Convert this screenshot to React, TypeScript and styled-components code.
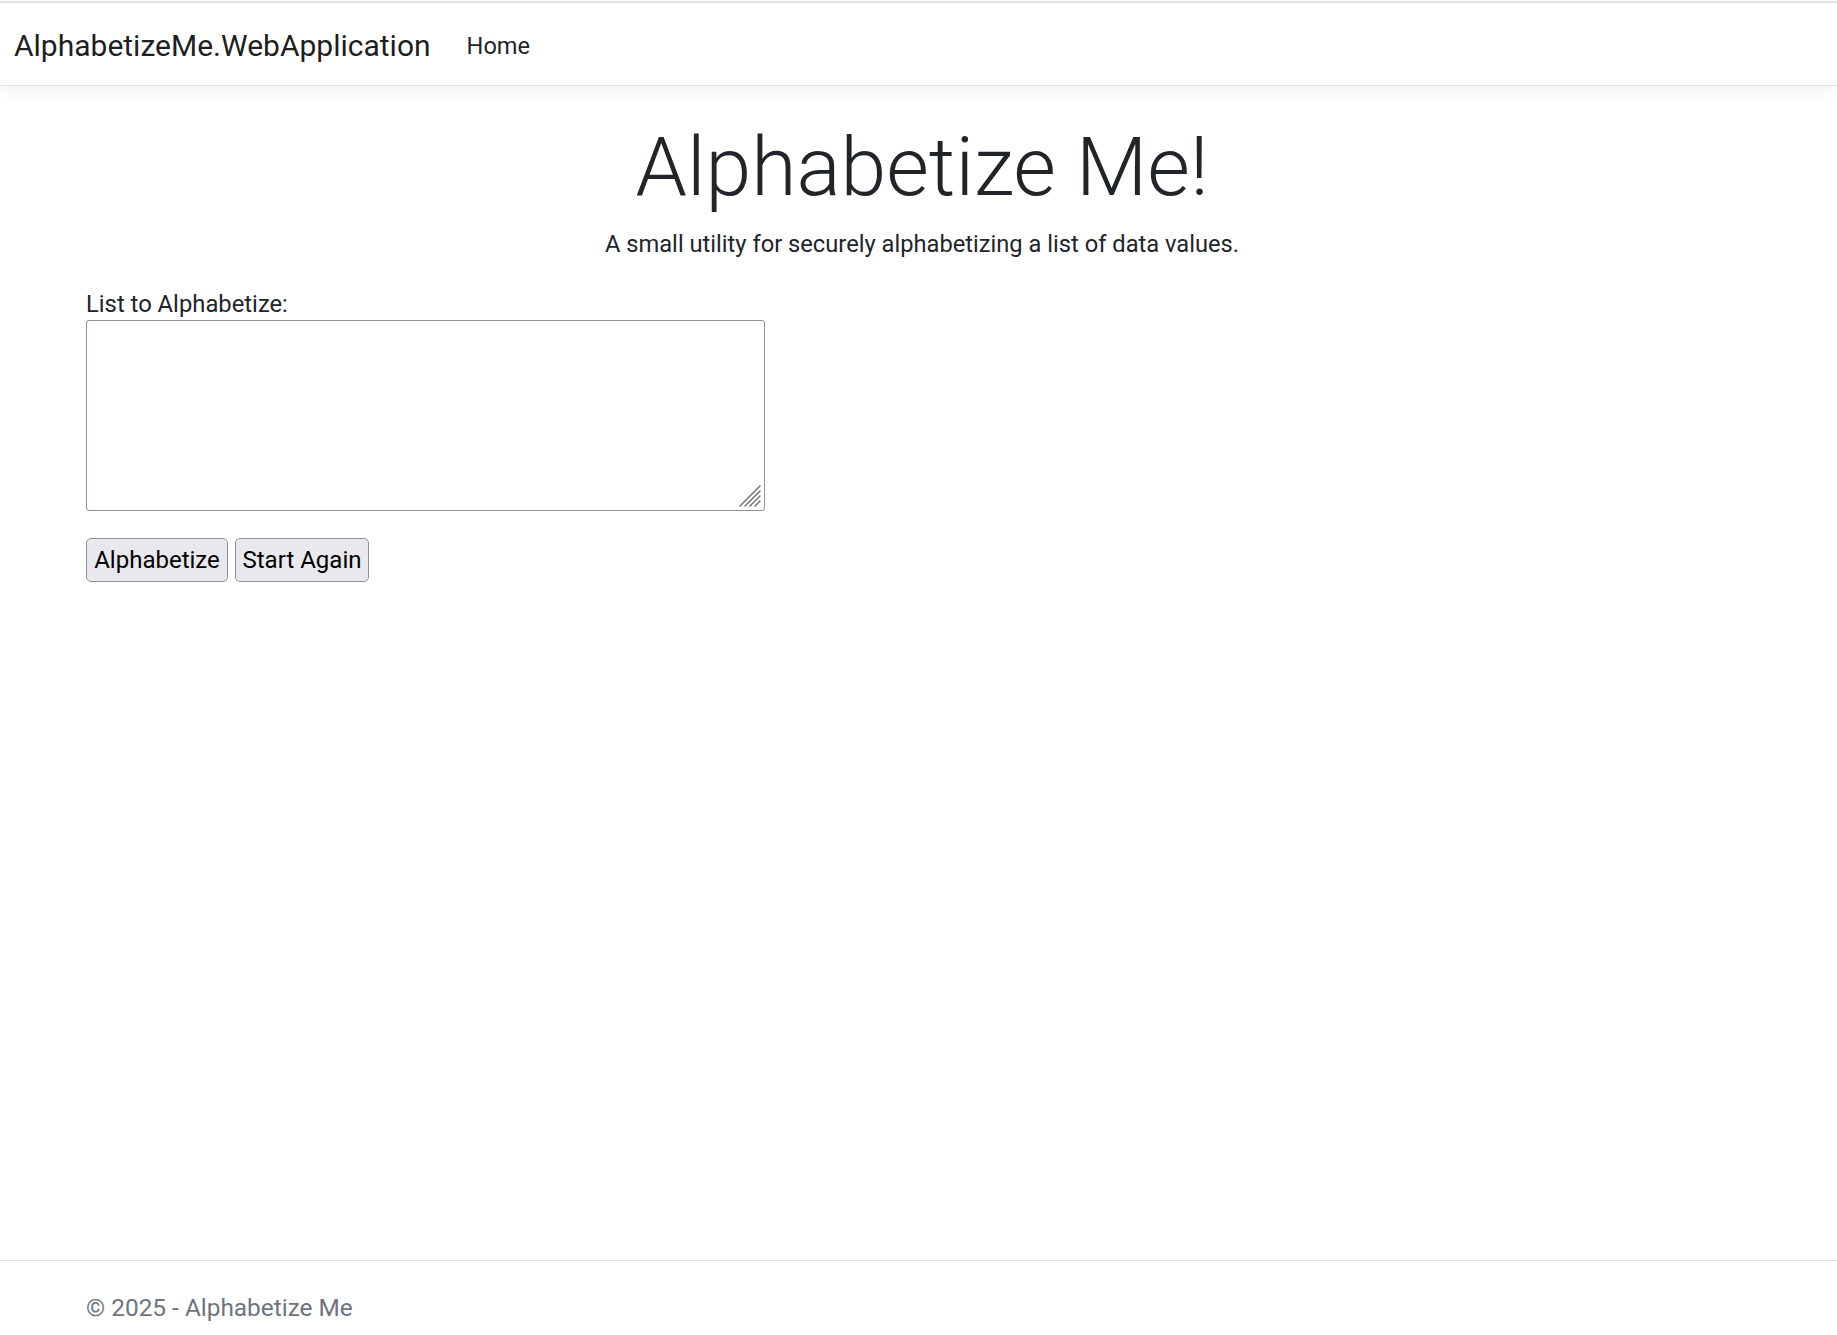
import React from "react";
import styled, { createGlobalStyle } from "styled-components";

const GlobalStyle = createGlobalStyle`
  html, body, #root {
    margin: 0;
    padding: 0;
    height: 100%;
    overflow: hidden;
    background: #ffffff;
  }
  body {
    font-family: Roboto, "Liberation Sans", sans-serif;
    color: #212529;
  }
  * { box-sizing: border-box; }
`;

const Page = styled.div`
  display: flex;
  flex-direction: column;
  height: 100vh;
`;

const NavBar = styled.nav`
  margin-top: 1px;
  border-top: 2px solid #e2e2e2;
  border-bottom: 1px solid #dee2e6;
  box-shadow: 0 6px 18px rgba(0, 0, 0, 0.05);
  height: 85px;
  display: flex;
  align-items: center;
  padding: 0 0 0 14px;
  background: #fff;
  position: relative;
  z-index: 1;
`;

const Brand = styled.a`
  font-size: 30px;
  line-height: 45px;
  color: rgba(0, 0, 0, 0.9);
  text-decoration: none;
  margin-right: 36px;
  margin-top: 2px;
`;

const NavLink = styled.a`
  font-size: 23.6px;
  line-height: 36px;
  color: #212529;
  text-decoration: none;
  margin-top: 4px;
`;

const Main = styled.main`
  padding: 31px 79px 0 86px;
  display: flex;
  flex-direction: column;
`;

const Hero = styled.div`
  text-align: center;
`;

const Title = styled.h1`
  font-size: 82.4px;
  font-weight: 300;
  line-height: 101px;
  margin: 0 0 8px;
`;

const Lead = styled.p`
  font-size: 23.7px;
  line-height: 36px;
  margin: 0 0 24px;
`;

const Label = styled.label`
  display: block;
  font-size: 23.8px;
  line-height: 36px;
  height: 33.5px;
`;

const Field = styled.div`
  position: relative;
  width: 679px;
  height: 191px;
`;

const ListBox = styled.textarea`
  display: block;
  width: 679px;
  height: 191px;
  border: 1px solid #8f8f9d;
  border-radius: 3px;
  padding: 3px;
  font: inherit;
  font-size: 24px;
  resize: none;
  outline: none;
  background: #fff;
`;

const Grip = styled.svg`
  position: absolute;
  right: 3px;
  bottom: 3px;
  width: 24px;
  height: 24px;
  pointer-events: none;
`;

const ButtonRow = styled.div`
  display: flex;
  gap: 7px;
  margin-top: 27px;
`;

const Button = styled.button<{ $w: number }>`
  width: ${(p) => p.$w}px;
  height: 44px;
  padding: 0;
  font-family: inherit;
  font-size: 24px;
  color: #000;
  background: #e9e9ed;
  border: 1px solid #8f8f9d;
  border-radius: 5px;
  text-align: center;
`;

const Footer = styled.footer`
  margin-top: auto;
  height: 75px;
  border-top: 1px solid #dee2e6;
  overflow: hidden;
  padding-left: 86px;
  font-size: 24.4px;
  line-height: 94px;
  color: #6c757d;
`;

export default function App() {
  return (
    <Page>
      <GlobalStyle />
      <NavBar>
        <Brand href="#">AlphabetizeMe.WebApplication</Brand>
        <NavLink href="#">Home</NavLink>
      </NavBar>
      <Main>
        <Hero>
          <Title>Alphabetize Me!</Title>
          <Lead>A small utility for securely alphabetizing a list of data values.</Lead>
        </Hero>
        <form onSubmit={(e) => e.preventDefault()}>
          <Label htmlFor="list">List to Alphabetize:</Label>
          <Field>
            <ListBox id="list" />
            <Grip viewBox="0 0 24 24" aria-hidden="true">
              <g stroke="#767676" strokeWidth="1.6" strokeLinecap="round">
                <line x1="2" y1="22" x2="22" y2="2" />
                <line x1="7" y1="22" x2="22" y2="7" />
                <line x1="12" y1="22" x2="22" y2="12" strokeDasharray="2 1.2" />
                <line x1="17" y1="22" x2="22" y2="17" strokeDasharray="1.5 1.2" />
              </g>
            </Grip>
          </Field>
          <ButtonRow>
            <Button type="submit" $w={142}>Alphabetize</Button>
            <Button type="button" $w={134}>Start Again</Button>
          </ButtonRow>
        </form>
      </Main>
      <Footer>© 2025 - Alphabetize Me</Footer>
    </Page>
  );
}
